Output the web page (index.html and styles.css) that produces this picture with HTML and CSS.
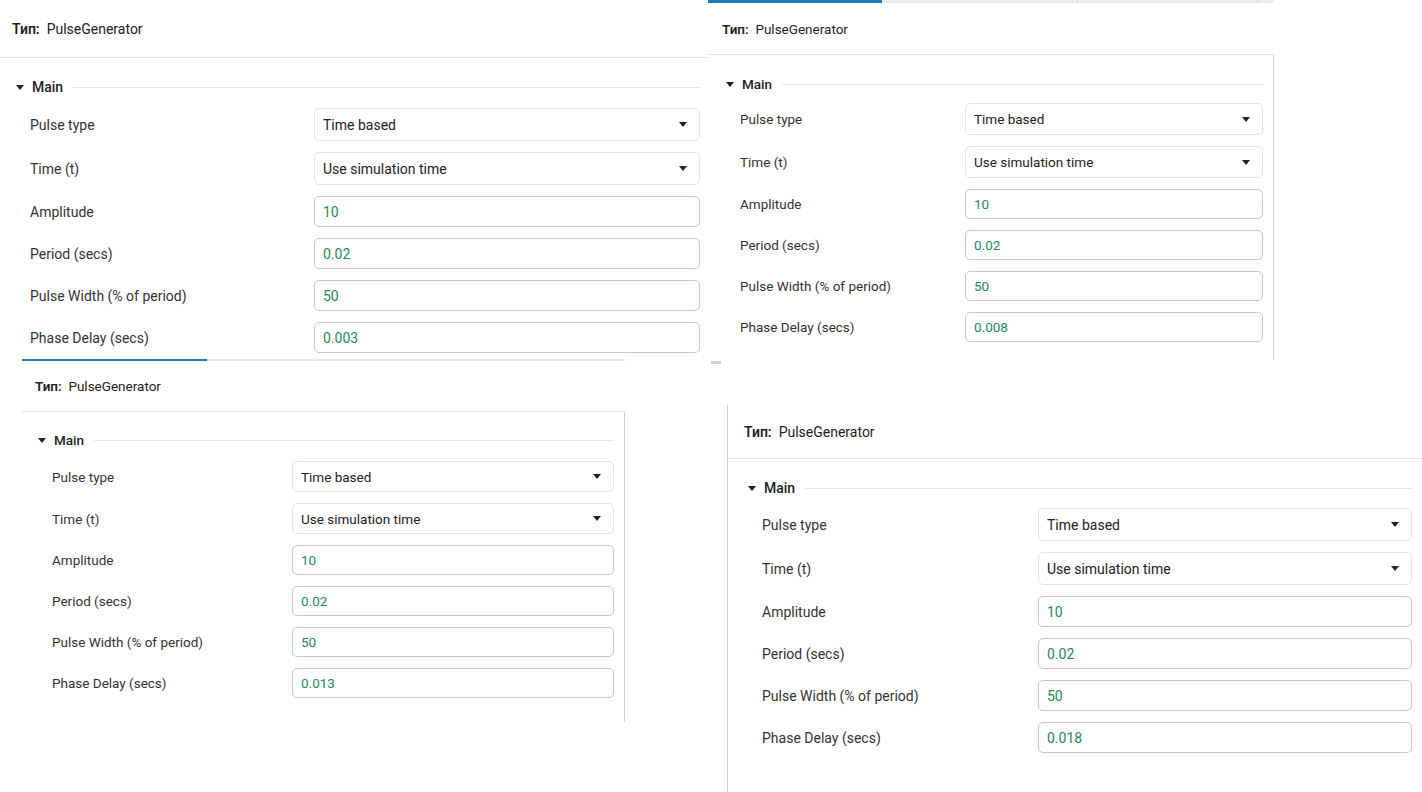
FILE: index.html
```html
<!DOCTYPE html>
<html lang="ru">
<head>
<meta charset="utf-8">
<title>PulseGenerator</title>
<link rel="stylesheet" href="styles.css">
</head>
<body>
<div class="canvas">

  <section class="panel panel-a">
    <div class="hdr"><b>Тип:</b>&nbsp; PulseGenerator</div>
    <div class="sec">
      <div class="title"><span class="caret"></span>Main<span class="rule"></span></div>
      <div class="grid">
        <span class="lbl">Pulse type</span><div class="field sel">Time based<span class="arrow"></span></div>
        <span class="lbl">Time (t)</span><div class="field sel">Use simulation time<span class="arrow"></span></div>
        <span class="lbl">Amplitude</span><div class="field">10</div>
        <span class="lbl">Period (secs)</span><div class="field">0.02</div>
        <span class="lbl">Pulse Width (% of period)</span><div class="field">50</div>
        <span class="lbl">Phase Delay (secs)</span><div class="field">0.003</div>
      </div>
    </div>
  </section>

  <section class="panel panel-b">
    <div class="tabs">
      <span class="tab active t1"></span>
      <span class="tab t2"></span>
      <span class="tab t3"></span>
      <span class="tab last"></span>
    </div>
    <div class="hdr"><b>Тип:</b>&nbsp; PulseGenerator</div>
    <div class="sec bordered">
      <div class="title"><span class="caret"></span>Main<span class="rule"></span></div>
      <div class="grid">
        <span class="lbl">Pulse type</span><div class="field sel">Time based<span class="arrow"></span></div>
        <span class="lbl">Time (t)</span><div class="field sel">Use simulation time<span class="arrow"></span></div>
        <span class="lbl">Amplitude</span><div class="field">10</div>
        <span class="lbl">Period (secs)</span><div class="field">0.02</div>
        <span class="lbl">Pulse Width (% of period)</span><div class="field">50</div>
        <span class="lbl">Phase Delay (secs)</span><div class="field">0.008</div>
      </div>
    </div>
  </section>

  <span class="dash"></span>

  <section class="panel panel-c">
    <div class="tabs">
      <span class="tab active t1"></span>
      <span class="tab last"></span>
    </div>
    <div class="hdr"><b>Тип:</b>&nbsp; PulseGenerator</div>
    <div class="sec bordered">
      <div class="title"><span class="caret"></span>Main<span class="rule"></span></div>
      <div class="grid">
        <span class="lbl">Pulse type</span><div class="field sel">Time based<span class="arrow"></span></div>
        <span class="lbl">Time (t)</span><div class="field sel">Use simulation time<span class="arrow"></span></div>
        <span class="lbl">Amplitude</span><div class="field">10</div>
        <span class="lbl">Period (secs)</span><div class="field">0.02</div>
        <span class="lbl">Pulse Width (% of period)</span><div class="field">50</div>
        <span class="lbl">Phase Delay (secs)</span><div class="field">0.013</div>
      </div>
    </div>
  </section>

  <section class="panel panel-d">
    <div class="hdr"><b>Тип:</b>&nbsp; PulseGenerator</div>
    <div class="sec">
      <div class="title"><span class="caret"></span>Main<span class="rule"></span></div>
      <div class="grid">
        <span class="lbl">Pulse type</span><div class="field sel">Time based<span class="arrow"></span></div>
        <span class="lbl">Time (t)</span><div class="field sel">Use simulation time<span class="arrow"></span></div>
        <span class="lbl">Amplitude</span><div class="field">10</div>
        <span class="lbl">Period (secs)</span><div class="field">0.02</div>
        <span class="lbl">Pulse Width (% of period)</span><div class="field">50</div>
        <span class="lbl">Phase Delay (secs)</span><div class="field">0.018</div>
      </div>
    </div>
  </section>

</div>
</body>
</html>
```

FILE: styles.css
```css
html, body {
  margin: 0;
  padding: 0;
  background: #ffffff;
}

.canvas {
  position: relative;
  width: 1422px;
  height: 792px;
  overflow: hidden;
  background: #ffffff;
  font-family: Roboto, "Liberation Sans", Arial, sans-serif;
  color: #2b2b2b;
}

.panel {
  position: absolute;
  box-sizing: border-box;
  display: flex;
  flex-direction: column;
  background: #ffffff;
}

.tabs {
  display: flex;
  height: var(--tab-h, 0px);
  flex: none;
}

.tab {
  display: block;
  height: 100%;
  background: #ebebeb;
}

.tab.active {
  background: #1c7cc0;
}

.tab.last {
  flex: 1;
}

.hdr {
  flex: none;
  box-sizing: border-box;
  height: var(--hdr-h);
  border-bottom: 1px solid #e3e3e3;
  display: flex;
  align-items: center;
  padding-left: var(--hdr-pl);
  font-size: var(--hdr-fs);
  color: #222;
}

.hdr b {
  font-weight: 600;
}

.sec {
  flex: 1;
  padding: var(--title-mt) var(--sec-pr) 0 var(--sec-pl);
}

.sec.bordered {
  border-right: 1px solid #cfcfcf;
}

.title {
  display: flex;
  align-items: center;
  height: 20px;
  font-size: var(--fs);
  font-weight: 500;
  color: #222;
}

.caret {
  width: 0;
  height: 0;
  border-left: 4px solid transparent;
  border-right: 4px solid transparent;
  border-top: 5px solid #222;
  margin-right: 8px;
}

.rule {
  flex: 1;
  height: 1px;
  background: #e6e6e6;
  margin-left: 10px;
}

.grid {
  display: grid;
  grid-template-columns: var(--label-w) 1fr;
  row-gap: var(--gap);
  align-items: center;
  padding-left: var(--grid-pl);
  margin-top: var(--grid-mt);
}

.lbl {
  font-size: var(--fs);
  color: #333;
}

.field {
  box-sizing: border-box;
  height: var(--in-h);
  border: 1px solid #c9c9c9;
  border-radius: 5px;
  display: flex;
  align-items: center;
  padding-left: 8px;
  font-size: var(--fs);
  color: #1d8a5a;
}

.field.sel {
  height: var(--sel-h);
  border-color: #e3e3e3;
  color: #222;
  justify-content: space-between;
  padding-right: 12px;
}

.arrow {
  width: 0;
  height: 0;
  border-left: 4.5px solid transparent;
  border-right: 4.5px solid transparent;
  border-top: 5px solid #222;
}

.dash {
  position: absolute;
  left: 711px;
  top: 361px;
  width: 10px;
  height: 3px;
  background: #d2d2d2;
}

/* Panel A (top-left) */
.panel-a {
  left: 0;
  top: 0;
  width: 708px;
  height: 358px;
  --hdr-h: 58px;
  --hdr-pl: 12px;
  --hdr-fs: 14px;
  --fs: 14px;
  --title-mt: 19px;
  --sec-pl: 16px;
  --sec-pr: 8px;
  --grid-pl: 14px;
  --label-w: 284px;
  --grid-mt: 11px;
  --sel-h: 33px;
  --in-h: 31px;
  --gap: 11px;
}

/* Panel B (top-right) */
.panel-b {
  left: 708px;
  top: 0;
  width: 566px;
  height: 360px;
  --tab-h: 3px;
  --hdr-h: 52px;
  --hdr-pl: 14px;
  --hdr-fs: 13.5px;
  --fs: 13.5px;
  --title-mt: 19px;
  --sec-pl: 18px;
  --sec-pr: 10px;
  --grid-pl: 14px;
  --label-w: 225px;
  --grid-mt: 9px;
  --sel-h: 32px;
  --in-h: 30px;
  --gap: 11px;
}

.panel-b .t1 { width: 174px; }
.panel-b .t2 { width: 195px; border-right: 1px solid #d6d6d6; }
.panel-b .t3 { width: 179px; border-right: 1px solid #d6d6d6; }

/* Panel C (bottom-left) */
.panel-c {
  left: 22px;
  top: 359px;
  width: 603px;
  height: 363px;
  --tab-h: 2px;
  --hdr-h: 51px;
  --hdr-pl: 13px;
  --hdr-fs: 13.5px;
  --fs: 13.5px;
  --title-mt: 18px;
  --sec-pl: 16px;
  --sec-pr: 10px;
  --grid-pl: 14px;
  --label-w: 240px;
  --grid-mt: 11px;
  --sel-h: 31px;
  --in-h: 30px;
  --gap: 11px;
}

.panel-c .t1 { width: 185px; }
.panel-c .last { background: #e8e8e8; }

/* Panel D (bottom-right) */
.panel-d {
  left: 727px;
  top: 405px;
  width: 695px;
  height: 387px;
  border-left: 1px solid #cfcfcf;
  --hdr-h: 54px;
  --hdr-pl: 16px;
  --hdr-fs: 14px;
  --fs: 14px;
  --title-mt: 19px;
  --sec-pl: 20px;
  --sec-pr: 10px;
  --grid-pl: 14px;
  --label-w: 276px;
  --grid-mt: 10px;
  --sel-h: 33px;
  --in-h: 31px;
  --gap: 11px;
}
```
